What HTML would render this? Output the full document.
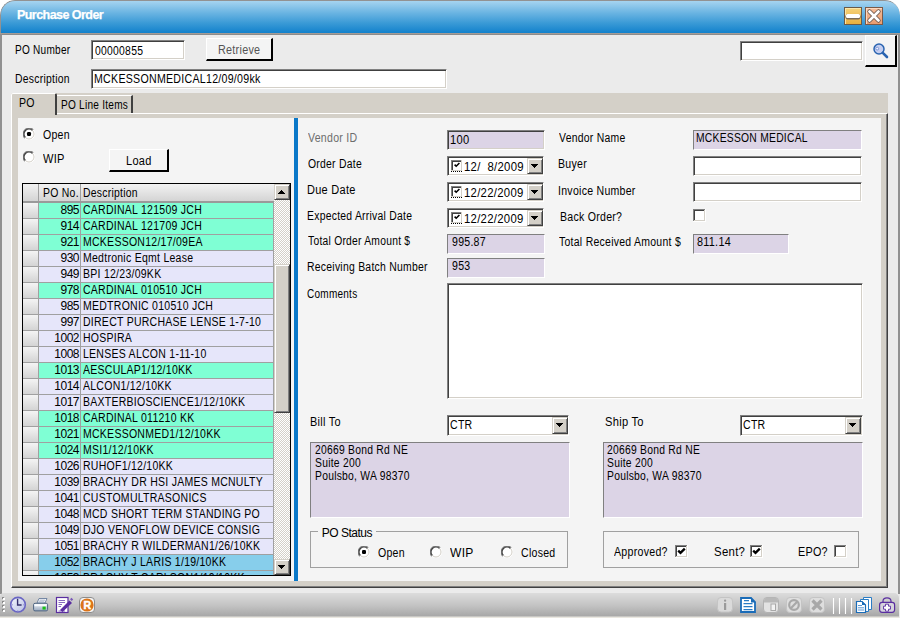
<!DOCTYPE html>
<html><head><meta charset="utf-8">
<style>
*{box-sizing:border-box}
html,body{margin:0;padding:0}
body{width:900px;height:618px;position:relative;overflow:hidden;background:#fff;font-family:"Liberation Sans",sans-serif;font-size:12px;color:#000}
.a{position:absolute}
.t{position:absolute;white-space:nowrap;line-height:13px;letter-spacing:-0.5px}
#win{left:0;top:0;width:900px;height:618px;background:#ebebeb;border-radius:15px 15px 0 0;overflow:hidden}
#title{left:0;top:0;width:900px;height:35px;border-radius:15px 15px 0 0;background:linear-gradient(#a6d4f0 0%,#6ab4e2 35%,#3a9ad6 65%,#0a7cca 100%);border:1px solid #929292;border-bottom:none;border-right:none}
#titleline{left:0;top:33px;width:900px;height:2px;background:#a49c96;border-bottom:1px solid #8c8c8c}
#lb{left:0;top:34px;width:2px;height:560px;background:#909090}
#rb{left:898px;top:34px;width:2px;height:560px;background:#909090}
.inp{position:absolute;background:#fff;border:1px solid;border-color:#808080 #fff #fff #808080;box-shadow:inset 1px 1px 0 #404040,inset -1px -1px 0 #d4d0c8}
.ro{position:absolute;background:#dcd4e6;border:1px solid;border-color:#808080 #fff #fff #808080}
.btn{position:absolute;background:#f4f4f4;border-top:1px solid #fff;border-left:1px solid #fff;border-right:2px solid #000;border-bottom:2px solid #000}
.dd{position:absolute;background:#d4d0c8;border:1px solid;border-color:#d4d0c8 #404040 #404040 #d4d0c8;box-shadow:inset 1px 1px 0 #fff,inset -1px -1px 0 #808080}
</style></head><body>
<div id="win" class="a">
<div id="title" class="a"></div>
<div class="t" style="left:17px;top:9px;color:#fff;font-weight:bold;font-size:12.5px;letter-spacing:-0.55px;-webkit-text-stroke:0.25px #fff">Purchase Order</div>
<div id="titleline" class="a"></div><div id="lb" class="a"></div><div id="rb" class="a"></div>
<div class="a" style="left:844px;top:7px;width:18px;height:18px;border:1px solid #6a5a48;background:linear-gradient(#f6d27a,#e8b040);box-shadow:inset 1px 1px 0 #fbe6a8"></div>
<div class="a" style="left:846px;top:14px;width:14px;height:3.5px;border-radius:1.5px;background:#fff;box-shadow:0 0.8px 0 0.6px #7a6a58"></div>
<div class="a" style="left:865px;top:7px;width:18px;height:18px;border:1px solid #7a5a48;background:linear-gradient(#f4bc98,#e89c70);box-shadow:inset 1px 1px 0 #fad8c0"></div>
<svg class="a" style="left:866px;top:8px" width="16" height="16" viewBox="0 0 16 16"><path d="M3.5 3.5 L12.5 12.5 M12.5 3.5 L3.5 12.5" stroke="#5a4a42" stroke-width="4.2" stroke-linecap="round"/><path d="M3.5 3.5 L12.5 12.5 M12.5 3.5 L3.5 12.5" stroke="#fff" stroke-width="2.8" stroke-linecap="round"/></svg>
<div class="t" style="left:15px;top:44px;;letter-spacing:0.3px;transform:scaleX(0.8376);transform-origin:0 0">PO Number</div>
<div class="inp" style="left:91px;top:40px;width:94px;height:20px;background:#fff"></div>
<div class="t" style="left:95px;top:45px;;letter-spacing:0.3px;transform:scaleX(0.8635);transform-origin:0 0">00000855</div>
<div class="btn" style="left:206px;top:38px;width:67px;height:23px"></div>
<div class="t" style="left:218px;top:44px;color:#555;letter-spacing:0.3px;transform:scaleX(0.9003);transform-origin:0 0">Retrieve</div>
<div class="t" style="left:15px;top:73px;;letter-spacing:0.3px;transform:scaleX(0.8651);transform-origin:0 0">Description</div>
<div class="inp" style="left:91px;top:69px;width:356px;height:20px;background:#fff"></div>
<div class="t" style="left:94px;top:73px;;letter-spacing:0.3px;transform:scaleX(0.8849);transform-origin:0 0">MCKESSONMEDICAL12/09/09kk</div>
<div class="inp" style="left:740px;top:41px;width:123px;height:20px;background:#fff"></div>
<div class="btn" style="left:865px;top:35px;width:32px;height:32px"></div>
<svg class="a" style="left:872px;top:42px" width="18" height="18" viewBox="0 0 18 18"><circle cx="7" cy="7" r="5" fill="#c4cef0" stroke="#2a64b0" stroke-width="1.5"/><circle cx="5.2" cy="6.6" r="1.4" fill="#f4f6ff" stroke="#5a7ac8" stroke-width="0.7"/><path d="M10.8 10.8 L15 15" stroke="#2a64b0" stroke-width="2.6" stroke-linecap="round"/></svg>
<div class="a" style="left:11px;top:93px;width:877px;height:21px;background:#d4d0c8"></div>
<div class="a" style="left:11px;top:113px;width:877px;height:475px;background:#d4d0c8;border-top:1px solid #fff;border-left:1px solid #fff;border-right:1px solid #404040;border-bottom:1px solid #404040;box-shadow:inset -1px -1px 0 #808080"></div>
<div class="a" style="left:11px;top:93px;width:46px;height:22px;background:#d4d0c8;border-top:1px solid #fff;border-left:1px solid #fff;border-right:2px solid #404040;border-radius:2px 2px 0 0"></div>
<div class="a" style="left:57px;top:95px;width:76px;height:18px;background:#d4d0c8;border-top:1px solid #fff;border-right:2px solid #404040;"></div>
<div class="a" style="left:18px;top:118px;width:863px;height:463px;background:#f4f4f4"></div>
<div class="t" style="left:19px;top:97px;;letter-spacing:0.3px;transform:scaleX(0.8800);transform-origin:0 0">PO</div>
<div class="t" style="left:61px;top:99px;;letter-spacing:0.3px;transform:scaleX(0.8400);transform-origin:0 0">PO Line Items</div>
<svg class="a" style="left:23px;top:128px" width="12" height="12" viewBox="0 0 12 12"><circle cx="6" cy="6" r="5" fill="#fff"/><path d="M1.76 10.24 A6 6 0 0 1 10.24 1.76" stroke="#808080" stroke-width="1.2" fill="none"/><path d="M2.46 9.54 A5 5 0 0 1 9.54 2.46" stroke="#404040" stroke-width="1.2" fill="none"/><path d="M10.24 1.76 A6 6 0 0 1 1.76 10.24" stroke="#fff" stroke-width="1" fill="none"/><path d="M9.54 2.46 A5 5 0 0 1 2.46 9.54" stroke="#d4d0c8" stroke-width="1" fill="none"/><rect x="4" y="4" width="4" height="4" rx="1.2" fill="#000"/></svg>
<div class="t" style="left:43px;top:129px;;letter-spacing:0.3px;transform:scaleX(0.8800);transform-origin:0 0">Open</div>
<svg class="a" style="left:23px;top:151px" width="12" height="12" viewBox="0 0 12 12"><circle cx="6" cy="6" r="5" fill="#fff"/><path d="M1.76 10.24 A6 6 0 0 1 10.24 1.76" stroke="#808080" stroke-width="1.2" fill="none"/><path d="M2.46 9.54 A5 5 0 0 1 9.54 2.46" stroke="#404040" stroke-width="1.2" fill="none"/><path d="M10.24 1.76 A6 6 0 0 1 1.76 10.24" stroke="#fff" stroke-width="1" fill="none"/><path d="M9.54 2.46 A5 5 0 0 1 2.46 9.54" stroke="#d4d0c8" stroke-width="1" fill="none"/></svg>
<div class="t" style="left:43px;top:153px;;letter-spacing:0.3px;transform:scaleX(0.9217);transform-origin:0 0">WIP</div>
<div class="btn" style="left:109px;top:149px;width:60px;height:23px"></div>
<div class="t" style="left:126px;top:155px;;letter-spacing:0.3px;transform:scaleX(0.9160);transform-origin:0 0">Load</div>
<div class="a" style="left:22px;top:183px;width:269px;height:393px;border:1px solid #000;background:#f4f4f4"></div>
<div class="a" style="left:23px;top:184px;width:251px;height:19px;background:linear-gradient(#f2f2f2,#d4d4d4);border-bottom:2px solid #9a9a9a"></div>
<div class="a" style="left:38px;top:184px;width:1px;height:17px;background:#a0a0a0"></div>
<div class="a" style="left:80px;top:184px;width:1px;height:17px;background:#a0a0a0"></div>
<div class="t" style="left:43px;top:187px;;letter-spacing:0.3px;transform:scaleX(0.8700);transform-origin:0 0">PO No.</div>
<div class="t" style="left:83px;top:187px;letter-spacing:0.3px;transform:scaleX(0.865);transform-origin:0 0">Description</div>
<div class="a" style="left:23px;top:203px;width:251px;height:372px;overflow:hidden">
<div class="a" style="left:0;top:0px;width:16px;height:16px;background:linear-gradient(#f4f4f4,#d4d4d4);border-right:1px solid #a0a0a0;border-bottom:1px solid #a0a0a0"></div><div class="a" style="left:16px;top:0px;width:235px;height:16px;background:#7fffd4;border-bottom:1px solid #a0a0a0;border-right:1px solid #a0a0a0"></div><div class="a" style="left:57px;top:0px;width:1px;height:16px;background:#a0a0a0"></div><div class="t" style="left:16px;width:40px;text-align:right;top:1px">895</div><div class="t" style="left:60px;top:1px;letter-spacing:0.3px;transform:scaleX(0.875);transform-origin:0 0">CARDINAL 121509 JCH</div>
<div class="a" style="left:0;top:16px;width:16px;height:16px;background:linear-gradient(#f4f4f4,#d4d4d4);border-right:1px solid #a0a0a0;border-bottom:1px solid #a0a0a0"></div><div class="a" style="left:16px;top:16px;width:235px;height:16px;background:#7fffd4;border-bottom:1px solid #a0a0a0;border-right:1px solid #a0a0a0"></div><div class="a" style="left:57px;top:16px;width:1px;height:16px;background:#a0a0a0"></div><div class="t" style="left:16px;width:40px;text-align:right;top:17px">914</div><div class="t" style="left:60px;top:17px;letter-spacing:0.3px;transform:scaleX(0.875);transform-origin:0 0">CARDINAL 121709 JCH</div>
<div class="a" style="left:0;top:32px;width:16px;height:16px;background:linear-gradient(#f4f4f4,#d4d4d4);border-right:1px solid #a0a0a0;border-bottom:1px solid #a0a0a0"></div><div class="a" style="left:16px;top:32px;width:235px;height:16px;background:#7fffd4;border-bottom:1px solid #a0a0a0;border-right:1px solid #a0a0a0"></div><div class="a" style="left:57px;top:32px;width:1px;height:16px;background:#a0a0a0"></div><div class="t" style="left:16px;width:40px;text-align:right;top:33px">921</div><div class="t" style="left:60px;top:33px;letter-spacing:0.3px;transform:scaleX(0.875);transform-origin:0 0">MCKESSON12/17/09EA</div>
<div class="a" style="left:0;top:48px;width:16px;height:16px;background:linear-gradient(#f4f4f4,#d4d4d4);border-right:1px solid #a0a0a0;border-bottom:1px solid #a0a0a0"></div><div class="a" style="left:16px;top:48px;width:235px;height:16px;background:#e6e6fa;border-bottom:1px solid #a0a0a0;border-right:1px solid #a0a0a0"></div><div class="a" style="left:57px;top:48px;width:1px;height:16px;background:#a0a0a0"></div><div class="t" style="left:16px;width:40px;text-align:right;top:49px">930</div><div class="t" style="left:60px;top:49px;letter-spacing:0.3px;transform:scaleX(0.875);transform-origin:0 0">Medtronic Eqmt Lease</div>
<div class="a" style="left:0;top:64px;width:16px;height:16px;background:linear-gradient(#f4f4f4,#d4d4d4);border-right:1px solid #a0a0a0;border-bottom:1px solid #a0a0a0"></div><div class="a" style="left:16px;top:64px;width:235px;height:16px;background:#e6e6fa;border-bottom:1px solid #a0a0a0;border-right:1px solid #a0a0a0"></div><div class="a" style="left:57px;top:64px;width:1px;height:16px;background:#a0a0a0"></div><div class="t" style="left:16px;width:40px;text-align:right;top:65px">949</div><div class="t" style="left:60px;top:65px;letter-spacing:0.3px;transform:scaleX(0.875);transform-origin:0 0">BPI 12/23/09KK</div>
<div class="a" style="left:0;top:80px;width:16px;height:16px;background:linear-gradient(#f4f4f4,#d4d4d4);border-right:1px solid #a0a0a0;border-bottom:1px solid #a0a0a0"></div><div class="a" style="left:16px;top:80px;width:235px;height:16px;background:#7fffd4;border-bottom:1px solid #a0a0a0;border-right:1px solid #a0a0a0"></div><div class="a" style="left:57px;top:80px;width:1px;height:16px;background:#a0a0a0"></div><div class="t" style="left:16px;width:40px;text-align:right;top:81px">978</div><div class="t" style="left:60px;top:81px;letter-spacing:0.3px;transform:scaleX(0.875);transform-origin:0 0">CARDINAL 010510 JCH</div>
<div class="a" style="left:0;top:96px;width:16px;height:16px;background:linear-gradient(#f4f4f4,#d4d4d4);border-right:1px solid #a0a0a0;border-bottom:1px solid #a0a0a0"></div><div class="a" style="left:16px;top:96px;width:235px;height:16px;background:#e6e6fa;border-bottom:1px solid #a0a0a0;border-right:1px solid #a0a0a0"></div><div class="a" style="left:57px;top:96px;width:1px;height:16px;background:#a0a0a0"></div><div class="t" style="left:16px;width:40px;text-align:right;top:97px">985</div><div class="t" style="left:60px;top:97px;letter-spacing:0.3px;transform:scaleX(0.875);transform-origin:0 0">MEDTRONIC 010510 JCH</div>
<div class="a" style="left:0;top:112px;width:16px;height:16px;background:linear-gradient(#f4f4f4,#d4d4d4);border-right:1px solid #a0a0a0;border-bottom:1px solid #a0a0a0"></div><div class="a" style="left:16px;top:112px;width:235px;height:16px;background:#e6e6fa;border-bottom:1px solid #a0a0a0;border-right:1px solid #a0a0a0"></div><div class="a" style="left:57px;top:112px;width:1px;height:16px;background:#a0a0a0"></div><div class="t" style="left:16px;width:40px;text-align:right;top:113px">997</div><div class="t" style="left:60px;top:113px;letter-spacing:0.3px;transform:scaleX(0.875);transform-origin:0 0">DIRECT PURCHASE LENSE 1-7-10</div>
<div class="a" style="left:0;top:128px;width:16px;height:16px;background:linear-gradient(#f4f4f4,#d4d4d4);border-right:1px solid #a0a0a0;border-bottom:1px solid #a0a0a0"></div><div class="a" style="left:16px;top:128px;width:235px;height:16px;background:#e6e6fa;border-bottom:1px solid #a0a0a0;border-right:1px solid #a0a0a0"></div><div class="a" style="left:57px;top:128px;width:1px;height:16px;background:#a0a0a0"></div><div class="t" style="left:16px;width:40px;text-align:right;top:129px">1002</div><div class="t" style="left:60px;top:129px;letter-spacing:0.3px;transform:scaleX(0.875);transform-origin:0 0">HOSPIRA</div>
<div class="a" style="left:0;top:144px;width:16px;height:16px;background:linear-gradient(#f4f4f4,#d4d4d4);border-right:1px solid #a0a0a0;border-bottom:1px solid #a0a0a0"></div><div class="a" style="left:16px;top:144px;width:235px;height:16px;background:#e6e6fa;border-bottom:1px solid #a0a0a0;border-right:1px solid #a0a0a0"></div><div class="a" style="left:57px;top:144px;width:1px;height:16px;background:#a0a0a0"></div><div class="t" style="left:16px;width:40px;text-align:right;top:145px">1008</div><div class="t" style="left:60px;top:145px;letter-spacing:0.3px;transform:scaleX(0.875);transform-origin:0 0">LENSES ALCON 1-11-10</div>
<div class="a" style="left:0;top:160px;width:16px;height:16px;background:linear-gradient(#f4f4f4,#d4d4d4);border-right:1px solid #a0a0a0;border-bottom:1px solid #a0a0a0"></div><div class="a" style="left:16px;top:160px;width:235px;height:16px;background:#7fffd4;border-bottom:1px solid #a0a0a0;border-right:1px solid #a0a0a0"></div><div class="a" style="left:57px;top:160px;width:1px;height:16px;background:#a0a0a0"></div><div class="t" style="left:16px;width:40px;text-align:right;top:161px">1013</div><div class="t" style="left:60px;top:161px;letter-spacing:0.3px;transform:scaleX(0.875);transform-origin:0 0">AESCULAP1/12/10KK</div>
<div class="a" style="left:0;top:176px;width:16px;height:16px;background:linear-gradient(#f4f4f4,#d4d4d4);border-right:1px solid #a0a0a0;border-bottom:1px solid #a0a0a0"></div><div class="a" style="left:16px;top:176px;width:235px;height:16px;background:#e6e6fa;border-bottom:1px solid #a0a0a0;border-right:1px solid #a0a0a0"></div><div class="a" style="left:57px;top:176px;width:1px;height:16px;background:#a0a0a0"></div><div class="t" style="left:16px;width:40px;text-align:right;top:177px">1014</div><div class="t" style="left:60px;top:177px;letter-spacing:0.3px;transform:scaleX(0.875);transform-origin:0 0">ALCON1/12/10KK</div>
<div class="a" style="left:0;top:192px;width:16px;height:16px;background:linear-gradient(#f4f4f4,#d4d4d4);border-right:1px solid #a0a0a0;border-bottom:1px solid #a0a0a0"></div><div class="a" style="left:16px;top:192px;width:235px;height:16px;background:#e6e6fa;border-bottom:1px solid #a0a0a0;border-right:1px solid #a0a0a0"></div><div class="a" style="left:57px;top:192px;width:1px;height:16px;background:#a0a0a0"></div><div class="t" style="left:16px;width:40px;text-align:right;top:193px">1017</div><div class="t" style="left:60px;top:193px;letter-spacing:0.3px;transform:scaleX(0.875);transform-origin:0 0">BAXTERBIOSCIENCE1/12/10KK</div>
<div class="a" style="left:0;top:208px;width:16px;height:16px;background:linear-gradient(#f4f4f4,#d4d4d4);border-right:1px solid #a0a0a0;border-bottom:1px solid #a0a0a0"></div><div class="a" style="left:16px;top:208px;width:235px;height:16px;background:#7fffd4;border-bottom:1px solid #a0a0a0;border-right:1px solid #a0a0a0"></div><div class="a" style="left:57px;top:208px;width:1px;height:16px;background:#a0a0a0"></div><div class="t" style="left:16px;width:40px;text-align:right;top:209px">1018</div><div class="t" style="left:60px;top:209px;letter-spacing:0.3px;transform:scaleX(0.875);transform-origin:0 0">CARDINAL 011210 KK</div>
<div class="a" style="left:0;top:224px;width:16px;height:16px;background:linear-gradient(#f4f4f4,#d4d4d4);border-right:1px solid #a0a0a0;border-bottom:1px solid #a0a0a0"></div><div class="a" style="left:16px;top:224px;width:235px;height:16px;background:#7fffd4;border-bottom:1px solid #a0a0a0;border-right:1px solid #a0a0a0"></div><div class="a" style="left:57px;top:224px;width:1px;height:16px;background:#a0a0a0"></div><div class="t" style="left:16px;width:40px;text-align:right;top:225px">1021</div><div class="t" style="left:60px;top:225px;letter-spacing:0.3px;transform:scaleX(0.875);transform-origin:0 0">MCKESSONMED1/12/10KK</div>
<div class="a" style="left:0;top:240px;width:16px;height:16px;background:linear-gradient(#f4f4f4,#d4d4d4);border-right:1px solid #a0a0a0;border-bottom:1px solid #a0a0a0"></div><div class="a" style="left:16px;top:240px;width:235px;height:16px;background:#7fffd4;border-bottom:1px solid #a0a0a0;border-right:1px solid #a0a0a0"></div><div class="a" style="left:57px;top:240px;width:1px;height:16px;background:#a0a0a0"></div><div class="t" style="left:16px;width:40px;text-align:right;top:241px">1024</div><div class="t" style="left:60px;top:241px;letter-spacing:0.3px;transform:scaleX(0.875);transform-origin:0 0">MSI1/12/10KK</div>
<div class="a" style="left:0;top:256px;width:16px;height:16px;background:linear-gradient(#f4f4f4,#d4d4d4);border-right:1px solid #a0a0a0;border-bottom:1px solid #a0a0a0"></div><div class="a" style="left:16px;top:256px;width:235px;height:16px;background:#e6e6fa;border-bottom:1px solid #a0a0a0;border-right:1px solid #a0a0a0"></div><div class="a" style="left:57px;top:256px;width:1px;height:16px;background:#a0a0a0"></div><div class="t" style="left:16px;width:40px;text-align:right;top:257px">1026</div><div class="t" style="left:60px;top:257px;letter-spacing:0.3px;transform:scaleX(0.875);transform-origin:0 0">RUHOF1/12/10KK</div>
<div class="a" style="left:0;top:272px;width:16px;height:16px;background:linear-gradient(#f4f4f4,#d4d4d4);border-right:1px solid #a0a0a0;border-bottom:1px solid #a0a0a0"></div><div class="a" style="left:16px;top:272px;width:235px;height:16px;background:#e6e6fa;border-bottom:1px solid #a0a0a0;border-right:1px solid #a0a0a0"></div><div class="a" style="left:57px;top:272px;width:1px;height:16px;background:#a0a0a0"></div><div class="t" style="left:16px;width:40px;text-align:right;top:273px">1039</div><div class="t" style="left:60px;top:273px;letter-spacing:0.3px;transform:scaleX(0.875);transform-origin:0 0">BRACHY DR HSI JAMES MCNULTY</div>
<div class="a" style="left:0;top:288px;width:16px;height:16px;background:linear-gradient(#f4f4f4,#d4d4d4);border-right:1px solid #a0a0a0;border-bottom:1px solid #a0a0a0"></div><div class="a" style="left:16px;top:288px;width:235px;height:16px;background:#e6e6fa;border-bottom:1px solid #a0a0a0;border-right:1px solid #a0a0a0"></div><div class="a" style="left:57px;top:288px;width:1px;height:16px;background:#a0a0a0"></div><div class="t" style="left:16px;width:40px;text-align:right;top:289px">1041</div><div class="t" style="left:60px;top:289px;letter-spacing:0.3px;transform:scaleX(0.875);transform-origin:0 0">CUSTOMULTRASONICS</div>
<div class="a" style="left:0;top:304px;width:16px;height:16px;background:linear-gradient(#f4f4f4,#d4d4d4);border-right:1px solid #a0a0a0;border-bottom:1px solid #a0a0a0"></div><div class="a" style="left:16px;top:304px;width:235px;height:16px;background:#e6e6fa;border-bottom:1px solid #a0a0a0;border-right:1px solid #a0a0a0"></div><div class="a" style="left:57px;top:304px;width:1px;height:16px;background:#a0a0a0"></div><div class="t" style="left:16px;width:40px;text-align:right;top:305px">1048</div><div class="t" style="left:60px;top:305px;letter-spacing:0.3px;transform:scaleX(0.875);transform-origin:0 0">MCD SHORT TERM STANDING PO</div>
<div class="a" style="left:0;top:320px;width:16px;height:16px;background:linear-gradient(#f4f4f4,#d4d4d4);border-right:1px solid #a0a0a0;border-bottom:1px solid #a0a0a0"></div><div class="a" style="left:16px;top:320px;width:235px;height:16px;background:#e6e6fa;border-bottom:1px solid #a0a0a0;border-right:1px solid #a0a0a0"></div><div class="a" style="left:57px;top:320px;width:1px;height:16px;background:#a0a0a0"></div><div class="t" style="left:16px;width:40px;text-align:right;top:321px">1049</div><div class="t" style="left:60px;top:321px;letter-spacing:0.3px;transform:scaleX(0.875);transform-origin:0 0">DJO VENOFLOW DEVICE CONSIG</div>
<div class="a" style="left:0;top:336px;width:16px;height:16px;background:linear-gradient(#f4f4f4,#d4d4d4);border-right:1px solid #a0a0a0;border-bottom:1px solid #a0a0a0"></div><div class="a" style="left:16px;top:336px;width:235px;height:16px;background:#e6e6fa;border-bottom:1px solid #a0a0a0;border-right:1px solid #a0a0a0"></div><div class="a" style="left:57px;top:336px;width:1px;height:16px;background:#a0a0a0"></div><div class="t" style="left:16px;width:40px;text-align:right;top:337px">1051</div><div class="t" style="left:60px;top:337px;letter-spacing:0.3px;transform:scaleX(0.875);transform-origin:0 0">BRACHY R WILDERMAN1/26/10KK</div>
<div class="a" style="left:0;top:352px;width:16px;height:16px;background:linear-gradient(#f4f4f4,#d4d4d4);border-right:1px solid #a0a0a0;border-bottom:1px solid #a0a0a0"></div><div class="a" style="left:16px;top:352px;width:235px;height:16px;background:#87ceeb;border-bottom:1px solid #a0a0a0;border-right:1px solid #a0a0a0"></div><div class="a" style="left:57px;top:352px;width:1px;height:16px;background:#a0a0a0"></div><div class="t" style="left:16px;width:40px;text-align:right;top:353px">1052</div><div class="t" style="left:60px;top:353px;letter-spacing:0.3px;transform:scaleX(0.875);transform-origin:0 0">BRACHY J LARIS 1/19/10KK</div>
<div class="a" style="left:0;top:368px;width:16px;height:16px;background:linear-gradient(#f4f4f4,#d4d4d4);border-right:1px solid #a0a0a0;border-bottom:1px solid #a0a0a0"></div><div class="a" style="left:16px;top:368px;width:235px;height:16px;background:#87ceeb;border-bottom:1px solid #a0a0a0;border-right:1px solid #a0a0a0"></div><div class="a" style="left:57px;top:368px;width:1px;height:16px;background:#a0a0a0"></div><div class="t" style="left:16px;width:40px;text-align:right;top:369px">1053</div><div class="t" style="left:60px;top:369px;letter-spacing:0.3px;transform:scaleX(0.875);transform-origin:0 0">BRACHY T CARLSON1/19/10KK</div>
</div>
<div class="a" style="left:274px;top:184px;width:16px;height:391px;background-color:#fff;background-image:repeating-conic-gradient(#d4d0c8 0 25%,#fff 0 50%);background-size:2px 2px"></div>
<div class="dd" style="left:274px;top:184px;width:16px;height:16px"></div><svg class="a" style="left:278px;top:190px" width="7" height="4" viewBox="0 0 7 4" shape-rendering="crispEdges" fill="#000"><rect x="3" y="0" width="1" height="1"/><rect x="2" y="1" width="3" height="1"/><rect x="1" y="2" width="5" height="1"/><rect x="0" y="3" width="7" height="1"/></svg>
<div class="dd" style="left:274px;top:264px;width:16px;height:149px"></div>
<div class="dd" style="left:274px;top:559px;width:16px;height:16px"></div><svg class="a" style="left:278px;top:565px" width="7" height="4" viewBox="0 0 7 4" shape-rendering="crispEdges" fill="#000"><rect x="0" y="0" width="7" height="1"/><rect x="1" y="1" width="5" height="1"/><rect x="2" y="2" width="3" height="1"/><rect x="3" y="3" width="1" height="1"/></svg>
<div class="a" style="left:294px;top:118px;width:4px;height:463px;background:#0a78c8"></div>
<div class="t" style="left:308px;top:132px;color:#6d6d6d;letter-spacing:0.3px;transform:scaleX(0.8800);transform-origin:0 0">Vendor ID</div>
<div class="inp" style="left:447px;top:130px;width:98px;height:20px;background:#dcd4e6"></div>
<div class="t" style="left:450px;top:134px;;letter-spacing:0.3px;transform:scaleX(0.9295);transform-origin:0 0">100</div>
<div class="t" style="left:308px;top:158px;;letter-spacing:0.3px;transform:scaleX(0.8651);transform-origin:0 0">Order Date</div>
<div class="inp" style="left:447px;top:156px;width:97px;height:20px;background:#fff"></div>
<svg class="a" style="left:451px;top:160px" width="12" height="13" viewBox="0 0 12 13" shape-rendering="crispEdges"><rect x="0" y="0" width="11" height="11" fill="#d4d0c8"/><rect x="0" y="0" width="10" height="10" fill="#808080"/><rect x="1" y="1" width="9" height="9" fill="#404040"/><rect x="2" y="2" width="8" height="8" fill="#fff"/><rect x="0" y="11" width="1" height="1" fill="#000"/><rect x="2" y="11" width="1" height="1" fill="#000"/><rect x="4" y="11" width="1" height="1" fill="#000"/><rect x="6" y="11" width="1" height="1" fill="#000"/><rect x="8" y="11" width="1" height="1" fill="#000"/><rect x="10" y="11" width="1" height="1" fill="#000"/></svg><svg class="a" style="left:451px;top:160px" width="12" height="12" viewBox="0 0 12 12"><path d="M3.6 4.6 L5.2 6.2 L8.4 3" stroke="#000" stroke-width="1.6" fill="none"/></svg>
<div class="t" style="left:464px;top:161px;letter-spacing:0.3px;transform:scaleX(0.945);transform-origin:0 0">12/&nbsp;&nbsp;8/2009</div>
<div class="dd" style="left:527px;top:158px;width:16px;height:16px"></div><svg class="a" style="left:531px;top:164px" width="7" height="4" viewBox="0 0 7 4" shape-rendering="crispEdges" fill="#000"><rect x="0" y="0" width="7" height="1"/><rect x="1" y="1" width="5" height="1"/><rect x="2" y="2" width="3" height="1"/><rect x="3" y="3" width="1" height="1"/></svg>
<div class="t" style="left:307px;top:184px;;letter-spacing:0.3px;transform:scaleX(0.9160);transform-origin:0 0">Due Date</div>
<div class="inp" style="left:447px;top:182px;width:97px;height:20px;background:#fff"></div>
<svg class="a" style="left:451px;top:186px" width="12" height="13" viewBox="0 0 12 13" shape-rendering="crispEdges"><rect x="0" y="0" width="11" height="11" fill="#d4d0c8"/><rect x="0" y="0" width="10" height="10" fill="#808080"/><rect x="1" y="1" width="9" height="9" fill="#404040"/><rect x="2" y="2" width="8" height="8" fill="#fff"/><rect x="0" y="11" width="1" height="1" fill="#000"/><rect x="2" y="11" width="1" height="1" fill="#000"/><rect x="4" y="11" width="1" height="1" fill="#000"/><rect x="6" y="11" width="1" height="1" fill="#000"/><rect x="8" y="11" width="1" height="1" fill="#000"/><rect x="10" y="11" width="1" height="1" fill="#000"/></svg><svg class="a" style="left:451px;top:186px" width="12" height="12" viewBox="0 0 12 12"><path d="M3.6 4.6 L5.2 6.2 L8.4 3" stroke="#000" stroke-width="1.6" fill="none"/></svg>
<div class="t" style="left:464px;top:187px;letter-spacing:0.3px;transform:scaleX(0.945);transform-origin:0 0">12/22/2009</div>
<div class="dd" style="left:527px;top:184px;width:16px;height:16px"></div><svg class="a" style="left:531px;top:190px" width="7" height="4" viewBox="0 0 7 4" shape-rendering="crispEdges" fill="#000"><rect x="0" y="0" width="7" height="1"/><rect x="1" y="1" width="5" height="1"/><rect x="2" y="2" width="3" height="1"/><rect x="3" y="3" width="1" height="1"/></svg>
<div class="t" style="left:307px;top:210px;;letter-spacing:0.3px;transform:scaleX(0.8649);transform-origin:0 0">Expected Arrival Date</div>
<div class="inp" style="left:447px;top:208px;width:97px;height:20px;background:#fff"></div>
<svg class="a" style="left:451px;top:212px" width="12" height="13" viewBox="0 0 12 13" shape-rendering="crispEdges"><rect x="0" y="0" width="11" height="11" fill="#d4d0c8"/><rect x="0" y="0" width="10" height="10" fill="#808080"/><rect x="1" y="1" width="9" height="9" fill="#404040"/><rect x="2" y="2" width="8" height="8" fill="#fff"/><rect x="0" y="11" width="1" height="1" fill="#000"/><rect x="2" y="11" width="1" height="1" fill="#000"/><rect x="4" y="11" width="1" height="1" fill="#000"/><rect x="6" y="11" width="1" height="1" fill="#000"/><rect x="8" y="11" width="1" height="1" fill="#000"/><rect x="10" y="11" width="1" height="1" fill="#000"/></svg><svg class="a" style="left:451px;top:212px" width="12" height="12" viewBox="0 0 12 12"><path d="M3.6 4.6 L5.2 6.2 L8.4 3" stroke="#000" stroke-width="1.6" fill="none"/></svg>
<div class="t" style="left:464px;top:213px;letter-spacing:0.3px;transform:scaleX(0.945);transform-origin:0 0">12/22/2009</div>
<div class="dd" style="left:527px;top:210px;width:16px;height:16px"></div><svg class="a" style="left:531px;top:216px" width="7" height="4" viewBox="0 0 7 4" shape-rendering="crispEdges" fill="#000"><rect x="0" y="0" width="7" height="1"/><rect x="1" y="1" width="5" height="1"/><rect x="2" y="2" width="3" height="1"/><rect x="3" y="3" width="1" height="1"/></svg>
<div class="t" style="left:308px;top:235px;;letter-spacing:0.3px;transform:scaleX(0.8572);transform-origin:0 0">Total Order Amount $</div>
<div class="ro" style="left:447px;top:234px;width:98px;height:20px"></div>
<div class="t" style="left:452px;top:236px;;letter-spacing:0.3px;transform:scaleX(0.8800);transform-origin:0 0">995.87</div>
<div class="t" style="left:307px;top:261px;;letter-spacing:0.3px;transform:scaleX(0.8668);transform-origin:0 0">Receiving Batch Number</div>
<div class="ro" style="left:447px;top:258px;width:98px;height:20px"></div>
<div class="t" style="left:452px;top:260px;;letter-spacing:0.3px;transform:scaleX(0.8800);transform-origin:0 0">953</div>
<div class="t" style="left:307px;top:288px;;letter-spacing:0.3px;transform:scaleX(0.8343);transform-origin:0 0">Comments</div>
<div class="inp" style="left:447px;top:283px;width:416px;height:116px;background:#fff"></div>
<div class="t" style="left:559px;top:132px;;letter-spacing:0.3px;transform:scaleX(0.8680);transform-origin:0 0">Vendor Name</div>
<div class="ro" style="left:693px;top:130px;width:169px;height:20px"></div>
<div class="t" style="left:696px;top:132px;;letter-spacing:0.3px;transform:scaleX(0.8590);transform-origin:0 0">MCKESSON MEDICAL</div>
<div class="t" style="left:558px;top:158px;;letter-spacing:0.3px;transform:scaleX(0.8800);transform-origin:0 0">Buyer</div>
<div class="inp" style="left:693px;top:156px;width:169px;height:20px;background:#fff"></div>
<div class="t" style="left:558px;top:185px;;letter-spacing:0.3px;transform:scaleX(0.8800);transform-origin:0 0">Invoice Number</div>
<div class="inp" style="left:693px;top:182px;width:169px;height:20px;background:#fff"></div>
<div class="t" style="left:560px;top:211px;;letter-spacing:0.3px;transform:scaleX(0.8800);transform-origin:0 0">Back Order?</div>
<svg class="a" style="left:693px;top:209px" width="13" height="13" viewBox="0 0 13 13" shape-rendering="crispEdges"><rect x="0" y="0" width="13" height="13" fill="#fff"/><rect x="0" y="0" width="12" height="12" fill="#808080"/><rect x="1" y="1" width="11" height="11" fill="#d4d0c8"/><rect x="1" y="1" width="10" height="10" fill="#404040"/><rect x="2" y="2" width="9" height="9" fill="#fff"/></svg>
<div class="t" style="left:559px;top:236px;;letter-spacing:0.3px;transform:scaleX(0.8735);transform-origin:0 0">Total Received Amount $</div>
<div class="ro" style="left:693px;top:234px;width:96px;height:20px"></div>
<div class="t" style="left:697px;top:236px;;letter-spacing:0.3px;transform:scaleX(0.9047);transform-origin:0 0">811.14</div>
<div class="t" style="left:310px;top:416px;;letter-spacing:0.3px;transform:scaleX(0.9093);transform-origin:0 0">Bill To</div>
<div class="inp" style="left:447px;top:415px;width:122px;height:21px;background:#fff"></div>
<div class="t" style="left:450px;top:419px;;letter-spacing:0.3px;transform:scaleX(0.8800);transform-origin:0 0">CTR</div>
<div class="dd" style="left:552px;top:417px;width:16px;height:17px"></div><svg class="a" style="left:556px;top:423px" width="7" height="4" viewBox="0 0 7 4" shape-rendering="crispEdges" fill="#000"><rect x="0" y="0" width="7" height="1"/><rect x="1" y="1" width="5" height="1"/><rect x="2" y="2" width="3" height="1"/><rect x="3" y="3" width="1" height="1"/></svg>
<div class="ro" style="left:310px;top:442px;width:260px;height:76px"></div>
<div class="t" style="left:315px;top:444px;letter-spacing:0.3px;transform:scaleX(0.86);transform-origin:0 0">20669 Bond Rd NE<br>Suite 200<br>Poulsbo, WA 98370</div>
<div class="t" style="left:605px;top:416px;;letter-spacing:0.3px;transform:scaleX(0.9266);transform-origin:0 0">Ship To</div>
<div class="inp" style="left:740px;top:415px;width:123px;height:21px;background:#fff"></div>
<div class="t" style="left:743px;top:419px;;letter-spacing:0.3px;transform:scaleX(0.8800);transform-origin:0 0">CTR</div>
<div class="dd" style="left:845px;top:417px;width:16px;height:17px"></div><svg class="a" style="left:849px;top:423px" width="7" height="4" viewBox="0 0 7 4" shape-rendering="crispEdges" fill="#000"><rect x="0" y="0" width="7" height="1"/><rect x="1" y="1" width="5" height="1"/><rect x="2" y="2" width="3" height="1"/><rect x="3" y="3" width="1" height="1"/></svg>
<div class="ro" style="left:603px;top:442px;width:260px;height:76px"></div>
<div class="t" style="left:607px;top:444px;letter-spacing:0.3px;transform:scaleX(0.86);transform-origin:0 0">20669 Bond Rd NE<br>Suite 200<br>Poulsbo, WA 98370</div>
<div class="a" style="left:310px;top:531px;width:258px;height:37px;border:1px solid #a0a0a0"></div>
<div class="t" style="left:318px;top:527px;background:#f4f4f4;padding:0 1px">&nbsp;PO Status&nbsp;</div>
<svg class="a" style="left:358px;top:546px" width="12" height="12" viewBox="0 0 12 12"><circle cx="6" cy="6" r="5" fill="#fff"/><path d="M1.76 10.24 A6 6 0 0 1 10.24 1.76" stroke="#808080" stroke-width="1.2" fill="none"/><path d="M2.46 9.54 A5 5 0 0 1 9.54 2.46" stroke="#404040" stroke-width="1.2" fill="none"/><path d="M10.24 1.76 A6 6 0 0 1 1.76 10.24" stroke="#fff" stroke-width="1" fill="none"/><path d="M9.54 2.46 A5 5 0 0 1 2.46 9.54" stroke="#d4d0c8" stroke-width="1" fill="none"/><rect x="4" y="4" width="4" height="4" rx="1.2" fill="#000"/></svg>
<div class="t" style="left:378px;top:547px;;letter-spacing:0.3px;transform:scaleX(0.8800);transform-origin:0 0">Open</div>
<svg class="a" style="left:430px;top:546px" width="12" height="12" viewBox="0 0 12 12"><circle cx="6" cy="6" r="5" fill="#fff"/><path d="M1.76 10.24 A6 6 0 0 1 10.24 1.76" stroke="#808080" stroke-width="1.2" fill="none"/><path d="M2.46 9.54 A5 5 0 0 1 9.54 2.46" stroke="#404040" stroke-width="1.2" fill="none"/><path d="M10.24 1.76 A6 6 0 0 1 1.76 10.24" stroke="#fff" stroke-width="1" fill="none"/><path d="M9.54 2.46 A5 5 0 0 1 2.46 9.54" stroke="#d4d0c8" stroke-width="1" fill="none"/></svg>
<div class="t" style="left:450px;top:547px;;letter-spacing:0.3px;transform:scaleX(1.0051);transform-origin:0 0">WIP</div>
<svg class="a" style="left:501px;top:546px" width="12" height="12" viewBox="0 0 12 12"><circle cx="6" cy="6" r="5" fill="#fff"/><path d="M1.76 10.24 A6 6 0 0 1 10.24 1.76" stroke="#808080" stroke-width="1.2" fill="none"/><path d="M2.46 9.54 A5 5 0 0 1 9.54 2.46" stroke="#404040" stroke-width="1.2" fill="none"/><path d="M10.24 1.76 A6 6 0 0 1 1.76 10.24" stroke="#fff" stroke-width="1" fill="none"/><path d="M9.54 2.46 A5 5 0 0 1 2.46 9.54" stroke="#d4d0c8" stroke-width="1" fill="none"/></svg>
<div class="t" style="left:521px;top:547px;;letter-spacing:0.3px;transform:scaleX(0.8800);transform-origin:0 0">Closed</div>
<div class="a" style="left:603px;top:531px;width:256px;height:37px;border:1px solid #a0a0a0"></div>
<div class="t" style="left:614px;top:546px;;letter-spacing:0.3px;transform:scaleX(0.8850);transform-origin:0 0">Approved?</div>
<svg class="a" style="left:675px;top:545px" width="13" height="13" viewBox="0 0 13 13" shape-rendering="crispEdges"><rect x="0" y="0" width="13" height="13" fill="#fff"/><rect x="0" y="0" width="12" height="12" fill="#808080"/><rect x="1" y="1" width="11" height="11" fill="#d4d0c8"/><rect x="1" y="1" width="10" height="10" fill="#404040"/><rect x="2" y="2" width="9" height="9" fill="#fff"/></svg><svg class="a" style="left:675px;top:545px" width="13" height="13" viewBox="0 0 13 13"><path d="M3.2 5.6 L5.5 7.9 L9.8 3.6" stroke="#000" stroke-width="2.3" fill="none"/></svg>
<div class="t" style="left:714px;top:546px;;letter-spacing:0.3px;transform:scaleX(0.9500);transform-origin:0 0">Sent?</div>
<svg class="a" style="left:750px;top:545px" width="13" height="13" viewBox="0 0 13 13" shape-rendering="crispEdges"><rect x="0" y="0" width="13" height="13" fill="#fff"/><rect x="0" y="0" width="12" height="12" fill="#808080"/><rect x="1" y="1" width="11" height="11" fill="#d4d0c8"/><rect x="1" y="1" width="10" height="10" fill="#404040"/><rect x="2" y="2" width="9" height="9" fill="#fff"/></svg><svg class="a" style="left:750px;top:545px" width="13" height="13" viewBox="0 0 13 13"><path d="M3.2 5.6 L5.5 7.9 L9.8 3.6" stroke="#000" stroke-width="2.3" fill="none"/></svg>
<div class="t" style="left:798px;top:546px;;letter-spacing:0.3px;transform:scaleX(0.9000);transform-origin:0 0">EPO?</div>
<svg class="a" style="left:834px;top:545px" width="13" height="13" viewBox="0 0 13 13" shape-rendering="crispEdges"><rect x="0" y="0" width="13" height="13" fill="#fff"/><rect x="0" y="0" width="12" height="12" fill="#808080"/><rect x="1" y="1" width="11" height="11" fill="#d4d0c8"/><rect x="1" y="1" width="10" height="10" fill="#404040"/><rect x="2" y="2" width="9" height="9" fill="#fff"/></svg>
<div class="a" style="left:0;top:593px;width:899px;height:25px;border-radius:4px 5px 0 0;background:linear-gradient(#dcdcdc 0px,#d4d4d4 4px,#c4c4c4 12px,#a8a8a8 23px,#e8e6e0 24px,#ebe8e0 25px)"></div>
<svg class="a" style="left:0;top:593px" width="900" height="25" viewBox="0 593 900 25">
<g fill="#8a8a8a"><rect x="2" y="597" width="2" height="2"/><rect x="2" y="601" width="2" height="2"/><rect x="2" y="605" width="2" height="2"/><rect x="2" y="609" width="2" height="2"/></g>
<g fill="#fff"><rect x="3" y="598" width="2" height="2"/><rect x="3" y="602" width="2" height="2"/><rect x="3" y="606" width="2" height="2"/><rect x="3" y="610" width="2" height="2"/></g>
<defs><linearGradient id="cg" x1="0" y1="0" x2="1" y2="1"><stop offset="0" stop-color="#f4f6fc"/><stop offset="1" stop-color="#b8c0e4"/></linearGradient>
<linearGradient id="pg" x1="0" y1="0" x2="0" y2="1"><stop offset="0" stop-color="#f0f4f8"/><stop offset="1" stop-color="#9aaac0"/></linearGradient></defs>
<circle cx="18" cy="604.7" r="7.3" fill="url(#cg)" stroke="#6a66c4" stroke-width="1.6"/>
<path d="M17.6 598.8 V605 H21.6" stroke="#34306e" stroke-width="1.4" fill="none"/>
<g fill="#8a86d0"><rect x="17.3" y="610.3" width="1" height="1"/><rect x="11.8" y="604.3" width="1" height="1"/><rect x="23.2" y="604.3" width="1" height="1"/></g>
<path d="M37 603 L39 598.5 H47 L45 603 Z" fill="#f2f4f8" stroke="#6a7e9c" stroke-width="0.9"/>
<path d="M39.5 600.2 H45 M38.8 601.8 H44.2" stroke="#98a8c0" stroke-width="0.8"/>
<rect x="33.6" y="603.3" width="14" height="7.6" rx="1.4" fill="url(#pg)" stroke="#4e6480" stroke-width="1"/>
<rect x="34.5" y="604.2" width="12" height="2" fill="#fafcff"/>
<rect x="42.5" y="606.6" width="3.2" height="3" fill="#18c018"/>
<rect x="56.5" y="597.5" width="11.5" height="15" fill="#fff" stroke="#5a2ea0" stroke-width="1.2"/>
<path d="M58.5 600.5 H65 M58.5 602.5 H65 M58.5 604.5 H62 M58.5 606.5 H61 M58.5 611 H65" stroke="#7a58b8" stroke-width="0.9"/>
<path d="M60 610 L69.5 600.5 L72 603 L62.5 612 Z" fill="#5a2ea0"/>
<path d="M70 599.3 L71.5 597.8 L73.2 599.5 L71.7 601 Z" fill="#7a58b8"/>
<rect x="79.5" y="597.5" width="15" height="15" rx="3.5" fill="#f4f4f4" stroke="#8c8c8c" stroke-width="1"/>
<circle cx="87" cy="605" r="6.6" fill="#dc7418"/>
<text x="87.2" y="609.4" text-anchor="middle" font-family="Liberation Sans" font-weight="bold" font-size="10.5" fill="#fff" stroke="#fff" stroke-width="0.5">R</text>
<rect x="717.5" y="597.5" width="15" height="14.5" rx="3.5" fill="#dadada" stroke="#c4c4c4" stroke-width="1"/>
<rect x="724" y="599.6" width="2.2" height="2.2" rx="1" fill="#9a9a9a"/><rect x="724" y="603" width="2.2" height="7" fill="#9a9a9a"/>
<path d="M741 598 H751 L755 602 V612 H741 Z" fill="#fff" stroke="#1a6cb8" stroke-width="1.8"/>
<path d="M751 597.5 L756 602.5 H751 Z" fill="#1a6cb8"/>
<path d="M744 600.6 H749 M743.5 603.6 H752.5 M743.5 606.6 H752.5 M743.5 609.6 H752.5" stroke="#2a7cc4" stroke-width="1.2"/>
<rect x="763.5" y="597.5" width="15" height="15" rx="3.5" fill="#e2e2e2" stroke="#b2b2b2" stroke-width="1"/>
<path d="M764 601 Q764 597.5 767.5 597.5 H774.5 Q778 597.5 778 601 V602.5 H764 Z" fill="#b8b8b8"/>
<rect x="771" y="604" width="4.5" height="6.5" fill="#f2f2f2" stroke="#a8a8a8" stroke-width="1"/>
<rect x="786.5" y="597.5" width="15" height="15" rx="3.5" fill="#dedede" stroke="#c4c4c4" stroke-width="1"/>
<circle cx="794" cy="605" r="4.8" fill="none" stroke="#a8a8a8" stroke-width="2.2"/>
<path d="M790.8 608.2 L797.2 601.8" stroke="#a8a8a8" stroke-width="2.2"/>
<rect x="809.5" y="597.5" width="15" height="15" rx="3.5" fill="#dedede" stroke="#c4c4c4" stroke-width="1"/>
<path d="M812.5 600.5 L821.5 609.5 M821.5 600.5 L812.5 609.5" stroke="#a8a8a8" stroke-width="3.2"/>
<g stroke="#fff" stroke-width="1.1"><path d="M833.5 598 V614 M839.5 598 V614 M845.5 598 V614 M851.5 598 V614"/></g>
<path d="M863.5 597.5 H871.5 V609.5 H863.5 Z" fill="#fff" stroke="#2a7cc4" stroke-width="1"/>
<path d="M860.5 599.5 H868.5 V611.5 H860.5 Z" fill="#fff" stroke="#2a7cc4" stroke-width="1"/>
<path d="M856.5 601.5 H862 L865.5 605 V612.5 H856.5 Z" fill="#fff" stroke="#1a6cb8" stroke-width="1.2"/>
<path d="M862 601 L866 605 H862 Z" fill="#1a6cb8"/>
<path d="M858 605.5 H862 M858 607.8 H864 M858 610 H864" stroke="#4a8cd0" stroke-width="0.9"/>
<path d="M883 602.5 V601 Q883 597.8 887 597.8 Q891 597.8 891 601 V602.5" fill="none" stroke="#5a2ea0" stroke-width="1.2"/>
<rect x="879.6" y="602.3" width="15" height="10" rx="2.5" fill="#d6d4dc" stroke="#5a2ea0" stroke-width="1.2"/>
<path d="M885.5 604.2 H888.5 V606.2 H890.5 V609.2 H888.5 V611.2 H885.5 V609.2 H883.5 V606.2 H885.5 Z" fill="#fff" stroke="#5a2ea0" stroke-width="0.9"/>
</svg>
</div>
</body></html>
